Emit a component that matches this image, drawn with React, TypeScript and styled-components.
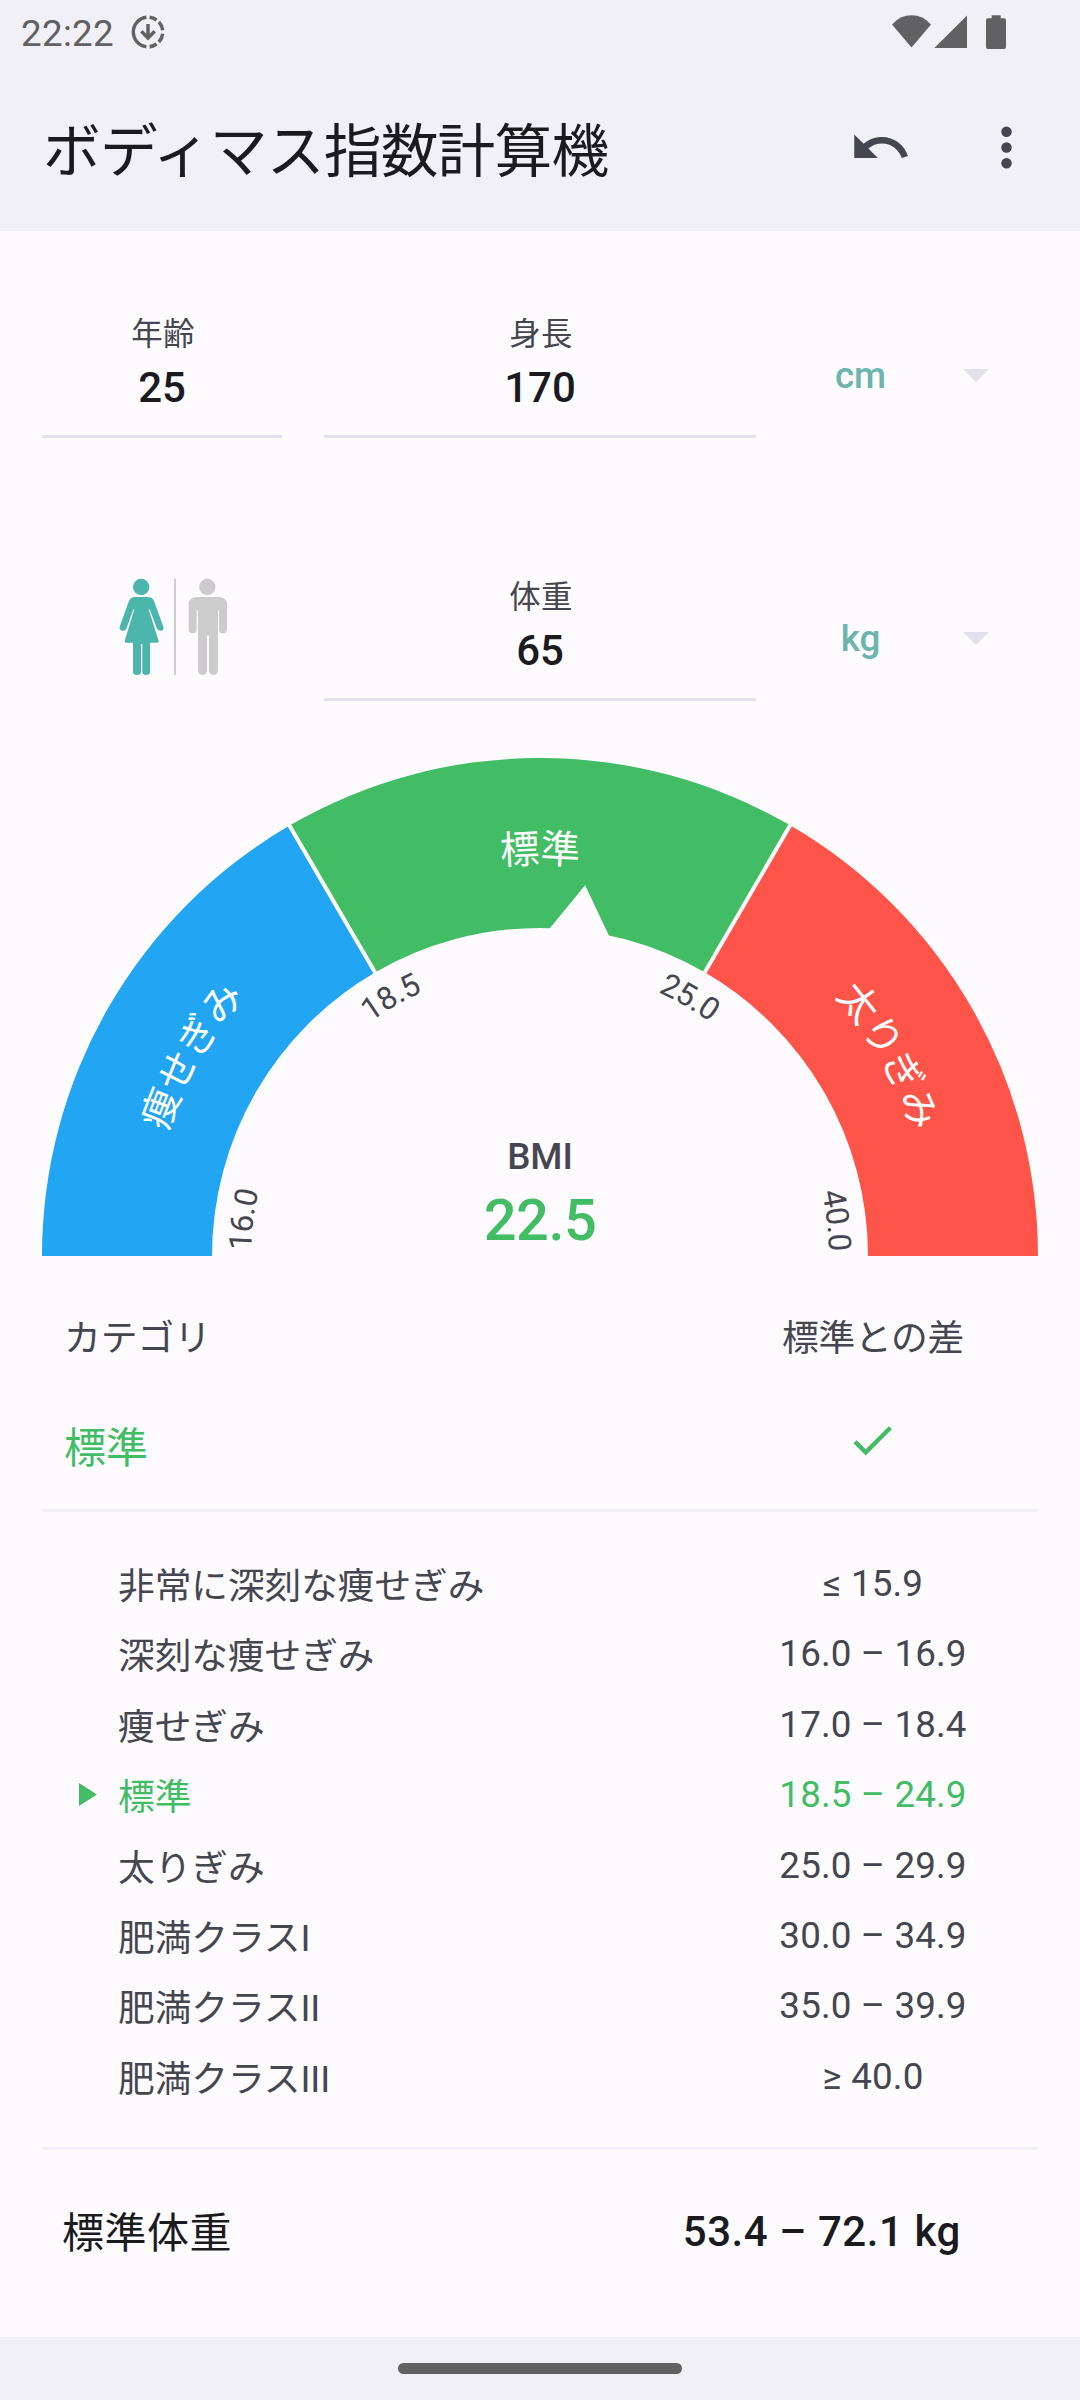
import React from "react";
import styled, { createGlobalStyle } from "styled-components";

const color = {
  surface: "#fefbff",
  bar: "#f1f0f7",
  line: "#e2e1ec",
  text: "#1b1b1f",
  muted: "#45464f",
  status: "#616163",
  green: "#42bd65",
  blue: "#22a6f4",
  red: "#ff5449",
  teal: "#4db6ac",
  unit: "#6bb5ad",
  grey: "#cccccc",
};

const fontStack = `Roboto, "Noto Sans CJK JP", sans-serif`;

const GlobalStyle = createGlobalStyle`
  html, body { margin: 0; padding: 0; background: ${color.surface}; }
  * { box-sizing: border-box; }
  svg { display: block; flex: none; }
`;

const Screen = styled.div`
  display: flex;
  flex-direction: column;
  width: 1080px;
  height: 2400px;
  overflow: hidden;
  background: ${color.surface};
  color: ${color.muted};
  font-family: ${fontStack};
  font-size: 36.75px;
  white-space: nowrap;
`;

const Header = styled.header`
  height: 231px;
  background: ${color.bar};
`;

const StatusBar = styled.div`
  display: flex;
  align-items: center;
  justify-content: space-between;
  height: 63px;
  padding: 0 74px 0 21px;
  color: ${color.status};
`;

const StatusGroup = styled.div`
  display: flex;
  align-items: center;
`;

const Clock = styled.span`
  width: 110px;
  line-height: 63px;
  padding-top: 3px;
  letter-spacing: 0.3px;
`;

const TitleBar = styled.div`
  display: flex;
  align-items: center;
  height: 168px;
  padding: 0 42px;
`;

const Title = styled.h1`
  flex: 1;
  margin: 0;
  padding: 10px 0 0 1px;
  font-size: 57.75px;
  font-weight: 400;
  letter-spacing: -0.8px;
  line-height: 80px;
  color: ${color.text};
`;

const Actions = styled.div`
  display: flex;
  gap: 63px;
  color: ${color.muted};
`;

const IconButton = styled.button`
  width: 63px;
  height: 63px;
  padding: 0;
  border: 0;
  background: none;
  color: inherit;
`;

const Form = styled.form`
  display: grid;
  grid-template-columns: 240px 432px 240px;
  grid-auto-rows: 138px;
  column-gap: 42px;
  row-gap: 125px;
  padding: 69px 42px 57px;
`;

const Field = styled.label`
  display: flex;
  flex-direction: column;
  align-items: center;
  padding-top: 14px;
  border-bottom: 3px solid ${color.line};
`;

const FieldLabel = styled.span`
  padding-left: 2px;
  font-size: 31.5px;
  line-height: 42px;
  letter-spacing: 0.2px;
`;

const FieldValue = styled.span`
  font-size: 42px;
  font-weight: 500;
  line-height: 63px;
  color: ${color.text};
`;

const UnitSelect = styled.div`
  display: grid;
  grid-template-columns: 125px 106px;
  align-items: center;
  justify-items: center;
  padding-top: 13px;
  font-weight: 500;
  color: ${color.unit};
`;

const SexToggle = styled.div`
  padding: 7px 0 0 68px;
`;

const GaugePanel = styled.section`
  height: 498px;
  padding: 0 42px;
`;

const Summary = styled.section`
  display: grid;
  grid-template-columns: 2fr 1fr;
  grid-template-rows: 71px 139px;
  margin: 43px 42px 0;
  border-bottom: 3px solid ${color.bar};
`;

const SummaryName = styled.div<{ $result?: boolean }>`
  display: flex;
  align-items: center;
  padding-left: 22px;
  padding-top: ${(p) => (p.$result ? 10 : 0)}px;
  font-size: ${(p) => (p.$result ? 42 : 36.75)}px;
  color: ${(p) => (p.$result ? color.green : color.muted)};
`;

const SummaryValue = styled.div<{ $result?: boolean }>`
  display: flex;
  align-items: center;
  justify-content: center;
  padding: ${(p) => (p.$result ? "2px 0 0 1px" : "0 0 0 2px")};
  letter-spacing: -0.3px;
`;

const Ranges = styled.ul`
  margin: 0 42px;
  padding: 39px 0 32.8px;
  list-style: none;
  border-bottom: 3px solid ${color.bar};
`;

const RangeRow = styled.li<{ $active: boolean }>`
  display: grid;
  grid-template-columns: 76px 588px 332px;
  height: 70.4px;
  line-height: 70.4px;
  color: ${(p) => (p.$active ? color.green : color.muted)};
`;

const Marker = styled.span`
  display: flex;
  align-items: center;
  padding: 0 0 6px 37px;
`;

const RangeName = styled.span`
  height: 70.4px;
  line-height: 72.4px;
  letter-spacing: -0.12px;
`;

const RangeValue = styled.span`
  height: 70px;
  padding-left: 2px;
  line-height: 65px;
  text-align: center;
  letter-spacing: 0.15px;
`;

const NormalWeight = styled.section`
  display: flex;
  align-items: center;
  justify-content: space-between;
  height: 163px;
  padding: 0 119px 0 62px;
  font-size: 42px;
  color: ${color.text};
`;

const NormalWeightLabel = styled.span`
  padding-bottom: 4px;
  letter-spacing: 0.5px;
`;

const NormalWeightValue = styled.span`
  font-weight: 500;
  letter-spacing: 0.58px;
`;

const NavBar = styled.footer`
  display: flex;
  justify-content: center;
  height: 63px;
  margin-top: auto;
  padding-top: 26px;
  background: ${color.bar};
`;

const HomeHandle = styled.div`
  width: 284px;
  height: 11px;
  border-radius: 6px;
  background: ${color.status};
`;

const DownloadIcon = () => (
  <svg width="34" height="34" viewBox="-17 -17 34 34" fill="none" stroke="currentColor" strokeWidth="3.4">
    <path d="M-1.6 -14.7A14.8 14.8 0 0 0 -1.6 14.7" />
    <path d="M1.6 -14.7A14.8 14.8 0 0 1 8.6 -12" />
    <path d="M10.9 -10A14.8 14.8 0 0 1 14.7 -1.7" />
    <path d="M14.7 1.7A14.8 14.8 0 0 1 10.9 10" />
    <path d="M8.6 12A14.8 14.8 0 0 1 1.6 14.7" />
    <path d="M0 -8V6M-6.7 -0.7L0 6L6.7 -0.7" />
  </svg>
);

const StatusIcons = () => (
  <svg width="114" height="34" viewBox="0 0 114 34" fill="currentColor">
    <path d="M0 9.5Q8 0.3 19.5 0.3T39 9.5L19.5 32.5Z" />
    <path d="M75 0.5V33H42.3Z" />
    <path d="M99.7 0.3h9v3h3.3a2 2 0 0 1 2 2V32a2 2 0 0 1 -2 2H96a2 2 0 0 1 -2 -2V5.3a2 2 0 0 1 2 -2h3.7z" />
  </svg>
);

const UndoIcon = () => (
  <svg width="63" height="63" viewBox="0 0 24 24" fill="currentColor">
    <path d="M12.5 8c-2.65 0-5.05.99-6.9 2.6L2 7v9h9l-3.62-3.62c1.39-1.16 3.16-1.88 5.12-1.88 3.54 0 6.55 2.31 7.6 5.5l2.37-.78C21.08 11.03 17.15 8 12.5 8z" />
  </svg>
);

const MoreIcon = () => (
  <svg width="63" height="63" viewBox="0 0 24 24" fill="currentColor">
    <circle cx="12" cy="6" r="2" />
    <circle cx="12" cy="12" r="2" />
    <circle cx="12" cy="18" r="2" />
  </svg>
);

const DropArrow = () => (
  <svg width="26" height="13" viewBox="0 0 26 13" fill={color.line}>
    <path d="M0 0H26L13 13Z" />
  </svg>
);

const SexIcon = () => (
  <svg width="130" height="112" viewBox="0 0 390 336">
    <g fill={color.teal}>
      <circle cx="93.5" cy="51" r="24.5" />
      <path d="M73 81H115Q128 82 133 95L160 170Q163 179 154 182Q145 184 141 176L119 118H116L146 213Q147 218 142 218H120V307Q119 315 109 315Q98 315 97 307V222H93V307Q92 315 81 315Q70 315 69 307V218H48Q43 218 44 213L73 118H70L49 176Q45 184 36 182Q27 179 29 170L56 95Q61 82 73 81Z" />
    </g>
    <rect x="192" y="26" width="6" height="289" fill={color.grey} />
    <g fill={color.grey}>
      <circle cx="292" cy="51" r="24.5" />
      <path d="M258 81H329Q351 83 351 104V179Q350 190 339 190Q328 190 327 179V121H324V304Q322 315 311 315Q299 315 297 304V200Q297 195 294 195Q291 195 291 200V304Q289 315 278 315Q266 315 264 304V121H260V179Q259 190 248 190Q237 190 236 179V104Q237 83 258 81Z" />
    </g>
  </svg>
);

const CheckIcon = () => (
  <svg width="52.5" height="52.5" viewBox="0 0 24 24" fill={color.green}>
    <path d="M9 16.17L4.83 12l-1.42 1.41L9 19 21 7l-1.41-1.41z" />
  </svg>
);

const C = 498;
const OUTER = 498;
const INNER = 328;

/* Angles run clockwise from the left end of the half circle. */
const at = (r: number, deg: number) => {
  const a = (deg * Math.PI) / 180;
  return `${(C - r * Math.cos(a)).toFixed(2)} ${(C - r * Math.sin(a)).toFixed(2)}`;
};

const sector = (from: number, to: number) =>
  `M${at(OUTER, from)}A${OUTER} ${OUTER} 0 0 1 ${at(OUTER, to)}L${at(INNER, to)}A${INNER} ${INNER} 0 0 0 ${at(INNER, from)}Z`;

const half = (r: number) => `M${at(r, 0)}A${r} ${r} 0 0 1 ${at(r, 180)}`;

const LABEL_R = 393;
const TICK_R = 289;
const LOW = 59.8;
const HIGH = 120.15;
const arcLength = (r: number, deg: number) => (r * deg * Math.PI) / 180;

const sectors = [
  { name: "痩せぎみ", from: 0, to: LOW, fill: color.blue },
  { name: "標準", from: LOW, to: HIGH, fill: color.green },
  { name: "太りぎみ", from: HIGH, to: 180, fill: color.red },
];

const ticks: { text: string; offset: number; anchor: "start" | "middle" | "end" }[] = [
  { text: "16.0", offset: 5.5, anchor: "start" },
  { text: "18.5", offset: arcLength(TICK_R, 60), anchor: "middle" },
  { text: "25.0", offset: arcLength(TICK_R, 120), anchor: "middle" },
  { text: "40.0", offset: arcLength(TICK_R, 180) - 5, anchor: "end" },
];

const Gauge = () => (
  <svg width="996" height="498" viewBox="0 0 996 498" fontFamily={fontStack}>
    <defs>
      <path id="label-arc" d={half(LABEL_R)} />
      <path id="tick-arc" d={half(TICK_R)} />
    </defs>
    {sectors.map((s) => (
      <path key={s.name} d={sector(s.from, s.to)} fill={s.fill} />
    ))}
    {[LOW, HIGH].map((d) => (
      <path key={d} d={`M${at(INNER - 3, d)}L${at(OUTER + 3, d)}`} stroke="#fff" strokeWidth="4" />
    ))}
    <path d="M507.6 170.6L543.1 127.3L566.9 177.5L560 190H510Z" fill={color.surface} />
    <g fontSize="39.4" fill="#fff" textAnchor="middle">
      {sectors.map((s) => (
        <text key={s.name}>
          <textPath href="#label-arc" startOffset={arcLength(LABEL_R, (s.from + s.to) / 2)}>
            {s.name}
          </textPath>
        </text>
      ))}
    </g>
    <g fontSize="31.5" fill={color.muted} letterSpacing="-0.3">
      {ticks.map((t) => (
        <text key={t.text} textAnchor={t.anchor}>
          <textPath href="#tick-arc" startOffset={t.offset}>
            {t.text}
          </textPath>
        </text>
      ))}
    </g>
    <g textAnchor="middle" fontWeight="500">
      <text x="498" y="411" fontSize="36.75" fill={color.muted}>
        BMI
      </text>
      <text x="498" y="482" fontSize="57.75" letterSpacing="-0.5" fill={color.green}>
        22.5
      </text>
    </g>
  </svg>
);

const ranges = [
  ["非常に深刻な痩せぎみ", "≤ 15.9"],
  ["深刻な痩せぎみ", "16.0 – 16.9"],
  ["痩せぎみ", "17.0 – 18.4"],
  ["標準", "18.5 – 24.9"],
  ["太りぎみ", "25.0 – 29.9"],
  ["肥満クラスI", "30.0 – 34.9"],
  ["肥満クラスII", "35.0 – 39.9"],
  ["肥満クラスIII", "≥ 40.0"],
];

export default function App() {
  return (
    <>
      <GlobalStyle />
      <Screen lang="ja">
        <Header>
          <StatusBar>
            <StatusGroup>
              <Clock>22:22</Clock>
              <DownloadIcon />
            </StatusGroup>
            <StatusIcons />
          </StatusBar>
          <TitleBar>
            <Title>ボディマス指数計算機</Title>
            <Actions>
              <IconButton aria-label="元に戻す">
                <UndoIcon />
              </IconButton>
              <IconButton aria-label="メニュー">
                <MoreIcon />
              </IconButton>
            </Actions>
          </TitleBar>
        </Header>

        <Form>
          <Field>
            <FieldLabel>年齢</FieldLabel>
            <FieldValue>25</FieldValue>
          </Field>
          <Field>
            <FieldLabel>身長</FieldLabel>
            <FieldValue>170</FieldValue>
          </Field>
          <UnitSelect>
            cm
            <DropArrow />
          </UnitSelect>
          <SexToggle>
            <SexIcon />
          </SexToggle>
          <Field>
            <FieldLabel>体重</FieldLabel>
            <FieldValue>65</FieldValue>
          </Field>
          <UnitSelect>
            kg
            <DropArrow />
          </UnitSelect>
        </Form>

        <GaugePanel>
          <Gauge />
        </GaugePanel>

        <Summary>
          <SummaryName>カテゴリ</SummaryName>
          <SummaryValue>標準との差</SummaryValue>
          <SummaryName $result>標準</SummaryName>
          <SummaryValue $result>
            <CheckIcon />
          </SummaryValue>
        </Summary>

        <Ranges>
          {ranges.map(([name, value]) => (
            <RangeRow key={name} $active={name === "標準"}>
              <Marker>
                {name === "標準" && (
                  <svg width="18" height="23" viewBox="0 0 18 23" fill={color.green}>
                    <path d="M0 0L18 11.5L0 23Z" />
                  </svg>
                )}
              </Marker>
              <RangeName>{name}</RangeName>
              <RangeValue>{value}</RangeValue>
            </RangeRow>
          ))}
        </Ranges>

        <NormalWeight>
          <NormalWeightLabel>標準体重</NormalWeightLabel>
          <NormalWeightValue>53.4 – 72.1 kg</NormalWeightValue>
        </NormalWeight>

        <NavBar>
          <HomeHandle />
        </NavBar>
      </Screen>
    </>
  );
}
